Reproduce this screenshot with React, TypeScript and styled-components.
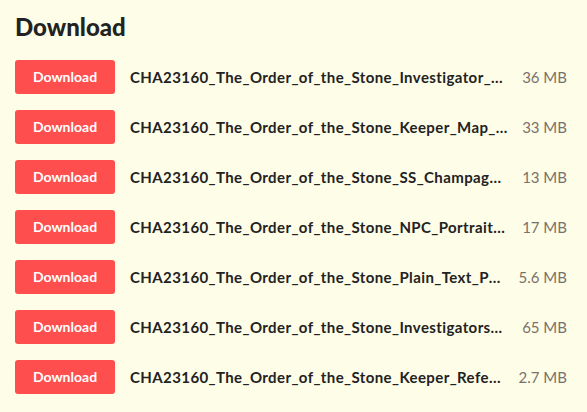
import React from 'react';
import styled, { createGlobalStyle } from 'styled-components';

const GlobalStyle = createGlobalStyle`
  html, body {
    margin: 0;
    padding: 0;
    background: #fefde7;
  }
  body {
    font-family: Lato, "Open Sans", sans-serif;
    color: #222;
  }
`;

const StyledWrap = styled.div`
  padding: 13px 20px 0px 15px;
  width: 587px;
  box-sizing: border-box;
`;

const StyledTitle = styled.h2`
  margin: 0px 0px 18px 0px;
  font-size: 24px;
  font-weight: 900;
  line-height: 1.2;
  color: #222;
`;

const StyledList = styled.div`
  display: flex;
  flex-direction: column;
  gap: 16px;
`;

const StyledRow = styled.div`
  display: flex;
  flex-direction: row;
  align-items: center;
  height: 34px;
`;

const StyledButton = styled.button`
  flex: 0 0 100px;
  width: 100px;
  height: 34px;
  border: none;
  border-radius: 3px;
  background-color: #fe4e4e;
  color: #fff;
  font-family: Lato, sans-serif;
  font-size: 14px;
  font-weight: 700;
  cursor: pointer;
  padding: 0;
`;

const StyledName = styled.span`
  flex: 1 1 0%;
  min-width: 0;
  margin-left: 15px;
  font-size: 15px;
  font-weight: 700;
  letter-spacing: 0.4px;
  color: #222;
  white-space: nowrap;
  overflow: hidden;
  text-overflow: ellipsis;
`;

const StyledSize = styled.span`
  flex: 0 0 auto;
  margin-left: 14px;
  font-size: 15px;
  font-weight: 400;
  color: #7a716a;
  white-space: nowrap;
`;

const files = [
  { name: 'CHA23160_The_Order_of_the_Stone_Investigator_Handouts.pdf', size: '36 MB' },
  { name: 'CHA23160_The_Order_of_the_Stone_Keeper_Map_Pack.pdf', size: '33 MB' },
  { name: 'CHA23160_The_Order_of_the_Stone_SS_Champagne_Deckplans.pdf', size: '13 MB' },
  { name: 'CHA23160_The_Order_of_the_Stone_NPC_Portraits.pdf', size: '17 MB' },
  { name: 'CHA23160_The_Order_of_the_Stone_Plain_Text_Print.pdf', size: '5.6 MB' },
  { name: 'CHA23160_The_Order_of_the_Stone_Investigators_Pregens.pdf', size: '65 MB' },
  { name: 'CHA23160_The_Order_of_the_Stone_Keeper_Reference.pdf', size: '2.7 MB' },
];

function App(): JSX.Element {
  return (
    <StyledWrap>
      <GlobalStyle />
      <StyledTitle>Download</StyledTitle>
      <StyledList>
        {files.map((file) => (
          <StyledRow key={file.name}>
            <StyledButton>Download</StyledButton>
            <StyledName>{file.name}</StyledName>
            <StyledSize>{file.size}</StyledSize>
          </StyledRow>
        ))}
      </StyledList>
    </StyledWrap>
  );
}

export default App;
